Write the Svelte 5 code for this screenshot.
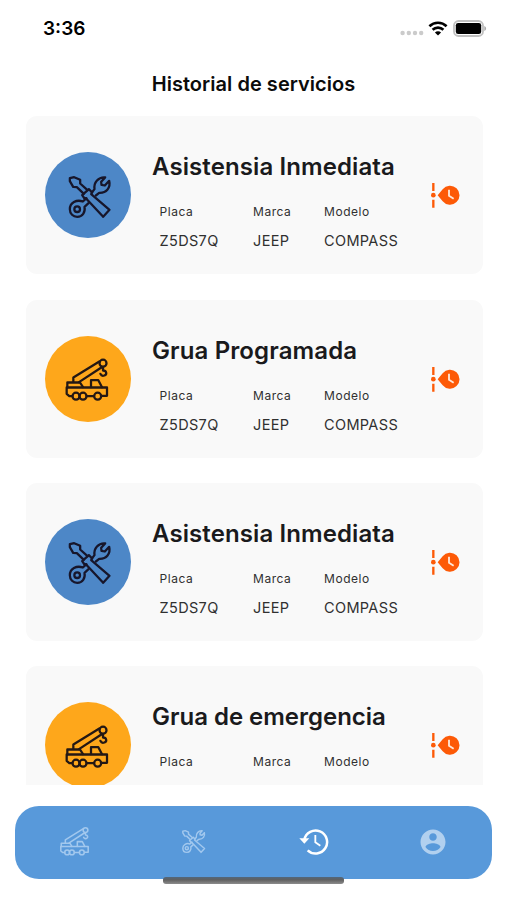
<script>
  const services = [
    { title: 'Asistensia Inmediata', kind: 'tools', tracking: 0.1 },
    { title: 'Grua Programada', kind: 'crane', tracking: 0.12 },
    { title: 'Asistensia Inmediata', kind: 'tools', tracking: 0.1 },
    { title: 'Grua de emergencia', kind: 'crane', tracking: -0.02, clipped: true }
  ];
</script>

{#snippet tools()}
  <svg class="glyph" viewBox="80 80 137 135">
    <path d="M90 91l13-3 18 8v11l22 20M132 138l-21-20-11-1-10-17v-9" />
    <path d="M127 142l20-18 10 10-3 5 55 47-19 21-52-56-4 1z" />
    <path d="M156 134l8-10c-3-20 12-37 32-35l-12 13 1 9 10 2 13-14c5 20-8 37-30 36l-10 8" />
    <path d="M140 151l-11 10c-19-7-39 4-39 23 0 14 10 23 22 23 16 0 25-14 22-30l12-11" />
    <circle cx="112" cy="184" r="8.500" />
  </svg>
{/snippet}

{#snippet crane()}
  <svg class="glyph" viewBox="72 78 137 135">
    <circle cx="189" cy="95" r="10.500" />
    <path d="M100 151v-13l78-48M117 152l67-44M189 107v10c11 0 13 12 4 15-5 2-10-1-12-5" />
    <path d="M82 168v-15h38l9 14M153 167v-21h22l11 21" />
    <path d="M97 194h-9l-8-7v-19h121v25h-16M140 194h22" />
    <circle cx="108" cy="194" r="10.5" />
    <circle cx="129" cy="194" r="10.5" />
    <circle cx="173" cy="194" r="10.5" />
  </svg>
{/snippet}

<div class="screen">
  <header class="status">
    <span class="time">3:36</span>
    <div class="signals">
      <svg width="24" height="6" viewBox="0 0 24 6" fill="#cbcbcb">
        <circle cx="2.6" cy="3" r="2.2" /><circle cx="8.8" cy="3" r="2.2" />
        <circle cx="15" cy="3" r="2.2" /><circle cx="21.2" cy="3" r="2.2" />
      </svg>
      <svg class="wifi" width="20" height="15" viewBox="0 0 20 15">
        <path d="M1.4 5.2a12.4 12.4 0 0 1 17.2 0M4.6 8.8a7.8 7.8 0 0 1 10.8 0" fill="none" stroke="#000" stroke-width="2.6" />
        <path d="M10 14.5l-3.1-3a4.4 4.4 0 0 1 6.2 0z" />
      </svg>
      <svg class="battery" width="34" height="17" viewBox="0 0 34 17">
        <rect x="1" y="1" width="29" height="15" rx="4.5" fill="#fff" stroke="#c0c0c0" stroke-width="1.8" />
        <rect x="2.8" y="2.9" width="25.4" height="11.2" rx="2.4" />
        <path d="M31.3 6v5c2.4-.7 2.4-4.300 0-5z" fill="#aaa" />
      </svg>
    </div>
  </header>

  <h1>Historial de servicios</h1>

  <main>
    {#each services as service}
      <article>
        <div class="badge {service.kind}">
          {#if service.kind === 'tools'}{@render tools()}{:else}{@render crane()}{/if}
        </div>
        <div class="info">
          <h2 style:letter-spacing="{service.tracking}px">{service.title}</h2>
          <dl>
            <div class="plate"><dt>Placa</dt>{#if !service.clipped}<dd>Z5DS7Q</dd>{/if}</div>
            <div class="brand"><dt>Marca</dt>{#if !service.clipped}<dd>JEEP</dd>{/if}</div>
            <div class="model"><dt>Modelo</dt>{#if !service.clipped}<dd>COMPASS</dd>{/if}</div>
          </dl>
        </div>
        <svg class="pending" width="30" height="26" viewBox="36 37 90 78">
          <path d="M39.500 40h7v24h-7zM39.500 90h7v24h-7z" />
          <circle cx="43" cy="76.500" r="7" />
          <path d="M56 76.500l15-18a28.500 28.500 0 1 1 0 36z" />
          <path d="M90 60v18l14 9" fill="none" stroke="#ffe8d8" stroke-width="5.500" />
        </svg>
      </article>
    {/each}
  </main>

  <nav>
    <div class="tab crane-tab">{@render crane()}</div>
    <div class="tab tools-tab">{@render tools()}</div>
    <div class="tab active">
      <svg width="30" height="28" viewBox="28 39 90 84">
        <path d="M44 74a34.500 34.500 0 1 1 10 32" fill="none" stroke="#fff" stroke-width="7.500" />
        <path d="M29 70h30l-15 16z" fill="#fff" />
        <path d="M77 60v22l15 10" fill="none" stroke="#fff" stroke-width="5.500" />
      </svg>
    </div>
    <div class="tab">
      <svg width="30" height="30" viewBox="0 0 24 24">
        <path fill="#b1d0ef" d="M12 2C6.480 2 2 6.480 2 12s4.480 10 10 10 10-4.480 10-10S17.520 2 12 2zm0 3c1.660 0 3 1.340 3 3s-1.340 3-3 3-3-1.340-3-3 1.340-3 3-3zm0 14.200c-2.500 0-4.710-1.280-6-3.220.030-1.990 4-3.080 6-3.080 1.990 0 5.970 1.090 6 3.080-1.290 1.940-3.500 3.220-6 3.220z" />
      </svg>
    </div>
    <div class="home"></div>
  </nav>
</div>

<style>
  :global(body) { margin: 0; background: #fff; }
  .screen {
    width: 507px;
    height: 900px;
    overflow: hidden;
    display: flex;
    flex-direction: column;
    background: #fff;
    color: #1a1a1c;
    font-family: Inter, "Liberation Sans", sans-serif;
  }
  .status {
    height: 56px;
    padding: 0 20px 0 43px;
    box-sizing: border-box;
    display: flex;
    flex: none;
    align-items: center;
    justify-content: space-between;
    color: #000;
  }
  .time { font-size: 19px; font-weight: 600; line-height: 24px; padding-top: 2px; }
  .signals { display: flex; align-items: center; }
  .signals svg:first-child { margin-top: 9px; }
  .wifi { margin-left: 4.500px; }
  .battery { margin-left: 5px; }
  h1 {
    flex: none;
    margin: 0;
    height: 60.400px;
    line-height: 56px;
    text-align: center;
    font-size: 20px;
    font-weight: 580;
    letter-spacing: 0.040px;
    color: #0b0b0b;
  }
  main {
    flex: none;
    height: 668.600px;
    overflow: hidden;
    display: flex;
    flex-direction: column;
    gap: 25.300px;
    padding: 0 24px 0 26px;
  }
  article {
    flex: none;
    height: 158px;
    box-sizing: border-box;
    padding: 0 22px 0 18.500px;
    display: flex;
    align-items: center;
    background: #f9f9f9;
    border-radius: 11px;
  }
  .badge {
    flex: none;
    width: 86px;
    height: 86px;
    border-radius: 50%;
    display: flex;
    align-items: center;
    justify-content: center;
    background: #4d87c7;
  }
  .badge.crane { background: #fea71b; }
  .glyph {
    width: 45.700px;
    height: 45px;
    fill: none;
    stroke: #17162b;
    stroke-width: 6.800;
    stroke-linejoin: round;
    stroke-linecap: round;
  }
  .badge .glyph { transform: translate(1.500px, 1.500px); }
  .badge.crane .glyph { stroke: #241814; transform: translate(-1px, 1.500px); }
  .info { flex: 1; align-self: stretch; margin-left: 21.500px; }
  h2 {
    margin: 36px 0 0;
    font-size: 24px;
    line-height: 30px;
    font-weight: 640;
    white-space: nowrap;
  }
  dl { margin: 21px 0 0 7.500px; display: flex; color: #303030; }
  .plate { width: 93.500px; }
  .brand { width: 71px; }
  dt { font-size: 12px; line-height: 18px; letter-spacing: 0.550px; }
  dd { margin: 9px 0 0; font-size: 14.500px; line-height: 22px; letter-spacing: 0.350px; white-space: nowrap; }
  .pending { flex: none; fill: #fd5a07; }
  nav {
    position: relative;
    flex: none;
    width: 477px;
    height: 73px;
    box-sizing: border-box;
    margin: 21px 0 0 15.300px;
    padding: 0 0 1px;
    display: flex;
    align-items: center;
    background: #5899da;
    border-radius: 24px;
  }
  .tab { flex: 1; display: flex; align-items: center; justify-content: center; }
  .tab:nth-child(n + 2) { padding-left: 2px; }
  .tab svg { flex: none; }
  .tab .glyph { stroke: #a2c8ee; }
  .crane-tab .glyph { width: 31px; height: 31px; }
  .tools-tab .glyph { width: 25px; height: 25px; stroke-width: 8; }
  .home {
    position: absolute;
    left: 148px;
    top: 71.500px;
    width: 181px;
    height: 6.500px;
    border-radius: 3px;
    background: linear-gradient(#52677c, #606060 40%, #8c8c8c);
  }
</style>
